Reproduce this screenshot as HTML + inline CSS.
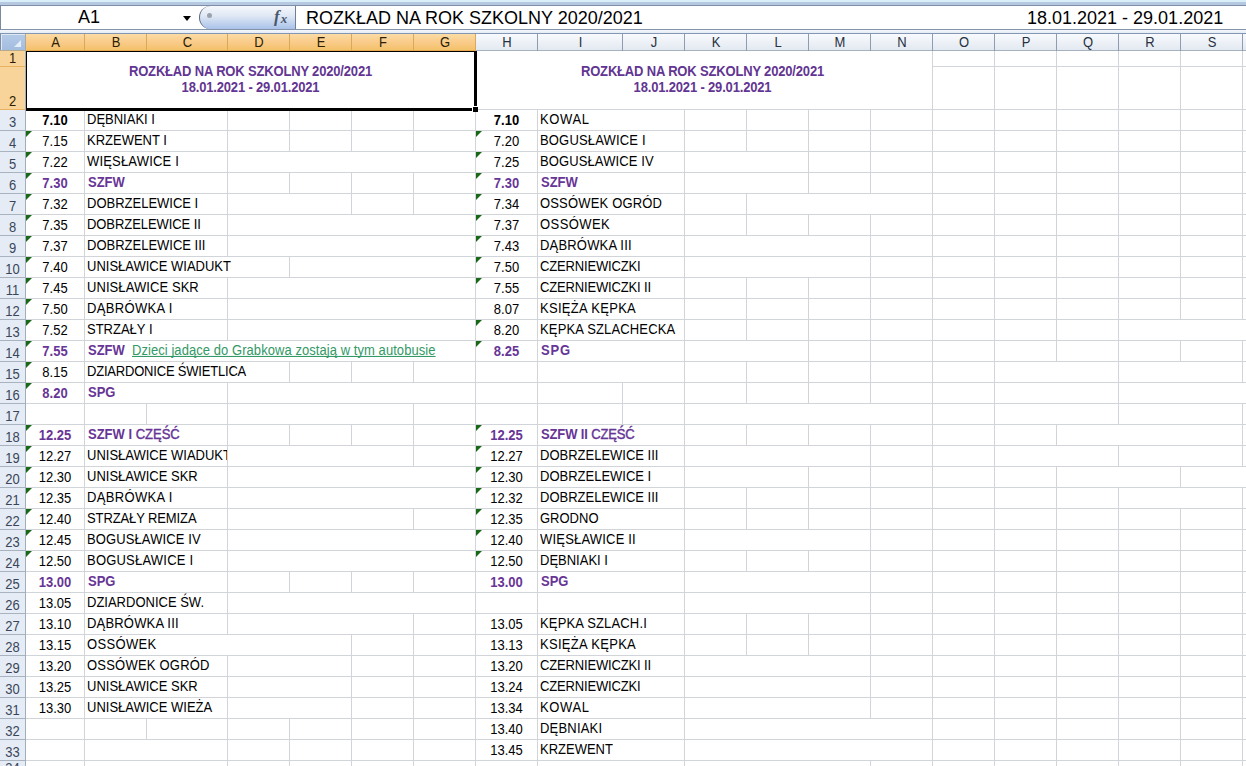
<!DOCTYPE html>
<html><head><meta charset="utf-8">
<style>
html,body{margin:0;padding:0;}
body{width:1246px;height:766px;overflow:hidden;position:relative;background:#fff;font-family:"Liberation Sans",sans-serif;}
.t{position:absolute;white-space:nowrap;line-height:13px;font-family:"Liberation Sans",sans-serif;transform:scaleY(1.08);transform-origin:0 100%}
.ttl{position:absolute;text-align:center;font-size:13px;letter-spacing:-0.17px;font-weight:bold;color:#623592;line-height:16px;white-space:nowrap;transform:scaleY(1.08);transform-origin:0 75%}
#top0{position:absolute;left:0;top:0;width:1246px;height:2px;background:#d9effa}
#top1{position:absolute;left:0;top:2px;width:1246px;height:3px;background:#b7c8e1}
#fbar{position:absolute;left:0;top:5px;width:1246px;height:23px;border-top:1px solid #7d8fa8;border-bottom:1px solid #8393a8;background:#fff}
#fstrip{position:absolute;left:0;top:30px;width:1246px;height:3px;background:linear-gradient(#f6f9fc,#e3ebf6);border-bottom:1px solid #8497b2}
#leftedge{position:absolute;left:0;top:5px;width:1px;height:25px;background:#7a8aa0}
#namebox{position:absolute;left:1px;top:6px;width:198px;height:23px;font-size:18px;line-height:23px;}
#nbtxt{position:absolute;left:77px;top:0}
#arrow{position:absolute;left:183px;top:16px;width:0;height:0;border-left:4.5px solid transparent;border-right:4.5px solid transparent;border-top:5px solid #000}
#pill{position:absolute;left:199px;top:6px;width:96px;height:23px;border-radius:11.5px 0 0 11.5px;background:linear-gradient(#f5f8fc,#e2e9f5 40%,#a9c2ea);}
#pillb{position:absolute;left:199px;top:6px;width:30px;height:23px;border-radius:11.5px 0 0 11.5px;border-left:1.3px solid #5d6b7e;box-sizing:border-box}
#pillsep{position:absolute;left:295px;top:6px;width:1px;height:23px;background:#6f7f94}
#dot{position:absolute;left:207px;top:13px;width:5px;height:5px;border-radius:50%;background:#9aa3ad}
#fx{position:absolute;left:274px;top:5px;color:#4a586c;line-height:23px;white-space:nowrap}
#ftxt{position:absolute;left:306px;top:7px;font-size:18px;line-height:23px;color:#000;white-space:nowrap}
#ftxt2{position:absolute;left:1027px;top:7px;font-size:18px;line-height:23px;color:#000;white-space:nowrap}
#selall{position:absolute;left:1px;top:34px;width:24px;height:16px;background:linear-gradient(#b5cbe8,#a3bde0);box-shadow:inset 1px 1px 0 #dfe9f6}
#selsep{position:absolute;left:25px;top:34px;width:1px;height:17px;background:#a9aa9c}
#selleft{position:absolute;left:0;top:34px;width:1px;height:17px;background:#7d8ea5}
#selbot{position:absolute;left:0;top:50px;width:25px;height:1px;background:#b5ab8c}
#seltri{position:absolute;left:14px;top:40px;width:0;height:0;border-left:7px solid transparent;border-bottom:7px solid #e4edf8}
.hl{display:inline-block;transform:scaleY(1.1);transform-origin:50% 100%}
.ch{position:absolute;top:34px;height:16px;line-height:17px;text-align:center;font-size:13px;color:#27313f;background:linear-gradient(#f8fafd,#e3e9f1);border-bottom:1px solid #a8b2bf}
.ch.sel{background:linear-gradient(#fbdca5,#f9ca88 55%,#f3c26a);color:#2c1e05;border-bottom:1px solid #e9a850}
.csep{position:absolute;top:34px;width:1px;height:17px;background:#8e9cb0}
.csep.sel{background:#d9a85a;height:16px}
.rh{position:absolute;left:0;width:25px;background:#e5ecf6;text-align:center;font-size:14px;color:#3a4658}
.rh.sel{background:#f9d49a;color:#2c1e05}
.rsep{position:absolute;left:0;width:25px;height:1px;background:#a9b3bf}
.rsep.sel{background:#eab25e}
#rhb{position:absolute;left:25px;top:51px;width:1px;height:715px;background:#a2adbb}
#grid{position:absolute;left:0;top:0}
</style></head><body>
<div id="top0"></div><div id="top1"></div>
<div id="fbar"></div>
<div id="leftedge"></div>
<div id="namebox"><span id="nbtxt">A1</span></div>
<div id="arrow"></div>
<div id="pill"></div><div id="pillb"></div><div id="dot"></div>
<div id="fx"><span style="font-family:'Liberation Serif',serif;font-weight:bold;font-style:italic;font-size:17px">f</span><span style="font-family:'Liberation Serif',serif;font-weight:bold;font-style:italic;font-size:13px;position:relative;left:1px;top:1px">x</span></div>
<div id="pillsep"></div>
<div id="ftxt">ROZKŁAD NA ROK SZKOLNY 2020/2021</div>
<div id="ftxt2">18.01.2021 - 29.01.2021</div>
<div id="fstrip"></div>
<div id="selall"></div><div id="seltri"></div><div id="selsep"></div><div id="selleft"></div><div id="selbot"></div>
<div class="ch sel" style="left:26px;width:59px"><span class="hl">A</span></div><div class="ch sel" style="left:85px;width:62px"><span class="hl">B</span></div><div class="ch sel" style="left:147px;width:81px"><span class="hl">C</span></div><div class="ch sel" style="left:228px;width:62px"><span class="hl">D</span></div><div class="ch sel" style="left:290px;width:62px"><span class="hl">E</span></div><div class="ch sel" style="left:352px;width:62px"><span class="hl">F</span></div><div class="ch sel" style="left:414px;width:62px"><span class="hl">G</span></div><div class="ch" style="left:476px;width:62px"><span class="hl">H</span></div><div class="ch" style="left:538px;width:85px"><span class="hl">I</span></div><div class="ch" style="left:623px;width:62px"><span class="hl">J</span></div><div class="ch" style="left:685px;width:62px"><span class="hl">K</span></div><div class="ch" style="left:747px;width:62px"><span class="hl">L</span></div><div class="ch" style="left:809px;width:62px"><span class="hl">M</span></div><div class="ch" style="left:871px;width:62px"><span class="hl">N</span></div><div class="ch" style="left:933px;width:62px"><span class="hl">O</span></div><div class="ch" style="left:995px;width:62px"><span class="hl">P</span></div><div class="ch" style="left:1057px;width:62px"><span class="hl">Q</span></div><div class="ch" style="left:1119px;width:62px"><span class="hl">R</span></div><div class="ch" style="left:1181px;width:62px"><span class="hl">S</span></div><div class="csep sel" style="left:84px"></div><div class="csep sel" style="left:146px"></div><div class="csep sel" style="left:227px"></div><div class="csep sel" style="left:289px"></div><div class="csep sel" style="left:351px"></div><div class="csep sel" style="left:413px"></div><div class="csep sel" style="left:475px"></div><div class="csep" style="left:537px"></div><div class="csep" style="left:622px"></div><div class="csep" style="left:684px"></div><div class="csep" style="left:746px"></div><div class="csep" style="left:808px"></div><div class="csep" style="left:870px"></div><div class="csep" style="left:932px"></div><div class="csep" style="left:994px"></div><div class="csep" style="left:1056px"></div><div class="csep" style="left:1118px"></div><div class="csep" style="left:1180px"></div><div class="csep" style="left:1242px"></div><div class="ch" style="left:1243px;width:10px"></div>
<div class="rh sel" style="top:51px;height:15px;line-height:15px"><span style="position:absolute;left:0;width:25px;bottom:0px;line-height:14px;font-size:13px;transform:scaleY(1.08);transform-origin:0 100%">1</span></div><div class="rsep sel" style="top:66px"></div><div class="rh sel" style="top:67px;height:42px;line-height:42px"><span style="position:absolute;left:0;width:25px;bottom:0px;line-height:14px;font-size:13px;transform:scaleY(1.08);transform-origin:0 100%">2</span></div><div class="rsep sel" style="top:109px"></div><div class="rh" style="top:110px;height:20px;line-height:20px"><span style="position:absolute;left:0;width:25px;bottom:0px;line-height:14px;font-size:13px;transform:scaleY(1.08);transform-origin:0 100%">3</span></div><div class="rsep" style="top:130px"></div><div class="rh" style="top:131px;height:20px;line-height:20px"><span style="position:absolute;left:0;width:25px;bottom:0px;line-height:14px;font-size:13px;transform:scaleY(1.08);transform-origin:0 100%">4</span></div><div class="rsep" style="top:151px"></div><div class="rh" style="top:152px;height:20px;line-height:20px"><span style="position:absolute;left:0;width:25px;bottom:0px;line-height:14px;font-size:13px;transform:scaleY(1.08);transform-origin:0 100%">5</span></div><div class="rsep" style="top:172px"></div><div class="rh" style="top:173px;height:20px;line-height:20px"><span style="position:absolute;left:0;width:25px;bottom:0px;line-height:14px;font-size:13px;transform:scaleY(1.08);transform-origin:0 100%">6</span></div><div class="rsep" style="top:193px"></div><div class="rh" style="top:194px;height:20px;line-height:20px"><span style="position:absolute;left:0;width:25px;bottom:0px;line-height:14px;font-size:13px;transform:scaleY(1.08);transform-origin:0 100%">7</span></div><div class="rsep" style="top:214px"></div><div class="rh" style="top:215px;height:20px;line-height:20px"><span style="position:absolute;left:0;width:25px;bottom:0px;line-height:14px;font-size:13px;transform:scaleY(1.08);transform-origin:0 100%">8</span></div><div class="rsep" style="top:235px"></div><div class="rh" style="top:236px;height:20px;line-height:20px"><span style="position:absolute;left:0;width:25px;bottom:0px;line-height:14px;font-size:13px;transform:scaleY(1.08);transform-origin:0 100%">9</span></div><div class="rsep" style="top:256px"></div><div class="rh" style="top:257px;height:20px;line-height:20px"><span style="position:absolute;left:0;width:25px;bottom:0px;line-height:14px;font-size:13px;transform:scaleY(1.08);transform-origin:0 100%">10</span></div><div class="rsep" style="top:277px"></div><div class="rh" style="top:278px;height:20px;line-height:20px"><span style="position:absolute;left:0;width:25px;bottom:0px;line-height:14px;font-size:13px;transform:scaleY(1.08);transform-origin:0 100%">11</span></div><div class="rsep" style="top:298px"></div><div class="rh" style="top:299px;height:20px;line-height:20px"><span style="position:absolute;left:0;width:25px;bottom:0px;line-height:14px;font-size:13px;transform:scaleY(1.08);transform-origin:0 100%">12</span></div><div class="rsep" style="top:319px"></div><div class="rh" style="top:320px;height:20px;line-height:20px"><span style="position:absolute;left:0;width:25px;bottom:0px;line-height:14px;font-size:13px;transform:scaleY(1.08);transform-origin:0 100%">13</span></div><div class="rsep" style="top:340px"></div><div class="rh" style="top:341px;height:20px;line-height:20px"><span style="position:absolute;left:0;width:25px;bottom:0px;line-height:14px;font-size:13px;transform:scaleY(1.08);transform-origin:0 100%">14</span></div><div class="rsep" style="top:361px"></div><div class="rh" style="top:362px;height:20px;line-height:20px"><span style="position:absolute;left:0;width:25px;bottom:0px;line-height:14px;font-size:13px;transform:scaleY(1.08);transform-origin:0 100%">15</span></div><div class="rsep" style="top:382px"></div><div class="rh" style="top:383px;height:20px;line-height:20px"><span style="position:absolute;left:0;width:25px;bottom:0px;line-height:14px;font-size:13px;transform:scaleY(1.08);transform-origin:0 100%">16</span></div><div class="rsep" style="top:403px"></div><div class="rh" style="top:404px;height:20px;line-height:20px"><span style="position:absolute;left:0;width:25px;bottom:0px;line-height:14px;font-size:13px;transform:scaleY(1.08);transform-origin:0 100%">17</span></div><div class="rsep" style="top:424px"></div><div class="rh" style="top:425px;height:20px;line-height:20px"><span style="position:absolute;left:0;width:25px;bottom:0px;line-height:14px;font-size:13px;transform:scaleY(1.08);transform-origin:0 100%">18</span></div><div class="rsep" style="top:445px"></div><div class="rh" style="top:446px;height:20px;line-height:20px"><span style="position:absolute;left:0;width:25px;bottom:0px;line-height:14px;font-size:13px;transform:scaleY(1.08);transform-origin:0 100%">19</span></div><div class="rsep" style="top:466px"></div><div class="rh" style="top:467px;height:20px;line-height:20px"><span style="position:absolute;left:0;width:25px;bottom:0px;line-height:14px;font-size:13px;transform:scaleY(1.08);transform-origin:0 100%">20</span></div><div class="rsep" style="top:487px"></div><div class="rh" style="top:488px;height:20px;line-height:20px"><span style="position:absolute;left:0;width:25px;bottom:0px;line-height:14px;font-size:13px;transform:scaleY(1.08);transform-origin:0 100%">21</span></div><div class="rsep" style="top:508px"></div><div class="rh" style="top:509px;height:20px;line-height:20px"><span style="position:absolute;left:0;width:25px;bottom:0px;line-height:14px;font-size:13px;transform:scaleY(1.08);transform-origin:0 100%">22</span></div><div class="rsep" style="top:529px"></div><div class="rh" style="top:530px;height:20px;line-height:20px"><span style="position:absolute;left:0;width:25px;bottom:0px;line-height:14px;font-size:13px;transform:scaleY(1.08);transform-origin:0 100%">23</span></div><div class="rsep" style="top:550px"></div><div class="rh" style="top:551px;height:20px;line-height:20px"><span style="position:absolute;left:0;width:25px;bottom:0px;line-height:14px;font-size:13px;transform:scaleY(1.08);transform-origin:0 100%">24</span></div><div class="rsep" style="top:571px"></div><div class="rh" style="top:572px;height:20px;line-height:20px"><span style="position:absolute;left:0;width:25px;bottom:0px;line-height:14px;font-size:13px;transform:scaleY(1.08);transform-origin:0 100%">25</span></div><div class="rsep" style="top:592px"></div><div class="rh" style="top:593px;height:20px;line-height:20px"><span style="position:absolute;left:0;width:25px;bottom:0px;line-height:14px;font-size:13px;transform:scaleY(1.08);transform-origin:0 100%">26</span></div><div class="rsep" style="top:613px"></div><div class="rh" style="top:614px;height:20px;line-height:20px"><span style="position:absolute;left:0;width:25px;bottom:0px;line-height:14px;font-size:13px;transform:scaleY(1.08);transform-origin:0 100%">27</span></div><div class="rsep" style="top:634px"></div><div class="rh" style="top:635px;height:20px;line-height:20px"><span style="position:absolute;left:0;width:25px;bottom:0px;line-height:14px;font-size:13px;transform:scaleY(1.08);transform-origin:0 100%">28</span></div><div class="rsep" style="top:655px"></div><div class="rh" style="top:656px;height:20px;line-height:20px"><span style="position:absolute;left:0;width:25px;bottom:0px;line-height:14px;font-size:13px;transform:scaleY(1.08);transform-origin:0 100%">29</span></div><div class="rsep" style="top:676px"></div><div class="rh" style="top:677px;height:20px;line-height:20px"><span style="position:absolute;left:0;width:25px;bottom:0px;line-height:14px;font-size:13px;transform:scaleY(1.08);transform-origin:0 100%">30</span></div><div class="rsep" style="top:697px"></div><div class="rh" style="top:698px;height:20px;line-height:20px"><span style="position:absolute;left:0;width:25px;bottom:0px;line-height:14px;font-size:13px;transform:scaleY(1.08);transform-origin:0 100%">31</span></div><div class="rsep" style="top:718px"></div><div class="rh" style="top:719px;height:20px;line-height:20px"><span style="position:absolute;left:0;width:25px;bottom:0px;line-height:14px;font-size:13px;transform:scaleY(1.08);transform-origin:0 100%">32</span></div><div class="rsep" style="top:739px"></div><div class="rh" style="top:740px;height:20px;line-height:20px"><span style="position:absolute;left:0;width:25px;bottom:0px;line-height:14px;font-size:13px;transform:scaleY(1.08);transform-origin:0 100%">33</span></div><div class="rsep" style="top:760px"></div><div class="rh" style="top:761px;height:20px"><span style="position:absolute;left:0;width:25px;top:1px;line-height:14px;font-size:13px;transform:scaleY(1.08)">34</span></div><div class="rsep" style="top:781px"></div>
<div id="rhb"></div>
<svg id="grid" width="1246" height="766">
<rect x="933" y="66" width="313" height="1" fill="#d1d5d9"/><rect x="932" y="51" width="1" height="58" fill="#d1d5d9"/><rect x="994" y="51" width="1" height="58" fill="#d1d5d9"/><rect x="1056" y="51" width="1" height="58" fill="#d1d5d9"/><rect x="1118" y="51" width="1" height="58" fill="#d1d5d9"/><rect x="1180" y="51" width="1" height="58" fill="#d1d5d9"/><rect x="1242" y="51" width="1" height="58" fill="#d1d5d9"/><rect x="476" y="109" width="770" height="1" fill="#d1d5d9"/><rect x="26" y="130" width="1220" height="1" fill="#d1d5d9"/><rect x="84" y="110" width="1" height="20" fill="#d1d5d9"/><rect x="227" y="110" width="1" height="20" fill="#d1d5d9"/><rect x="289" y="110" width="1" height="20" fill="#d1d5d9"/><rect x="351" y="110" width="1" height="20" fill="#d1d5d9"/><rect x="413" y="110" width="1" height="20" fill="#d1d5d9"/><rect x="475" y="110" width="1" height="20" fill="#d1d5d9"/><rect x="537" y="110" width="1" height="20" fill="#d1d5d9"/><rect x="684" y="110" width="1" height="20" fill="#d1d5d9"/><rect x="746" y="110" width="1" height="20" fill="#d1d5d9"/><rect x="808" y="110" width="1" height="20" fill="#d1d5d9"/><rect x="870" y="110" width="1" height="20" fill="#d1d5d9"/><rect x="932" y="110" width="1" height="20" fill="#d1d5d9"/><rect x="994" y="110" width="1" height="20" fill="#d1d5d9"/><rect x="1056" y="110" width="1" height="20" fill="#d1d5d9"/><rect x="1118" y="110" width="1" height="20" fill="#d1d5d9"/><rect x="1180" y="110" width="1" height="20" fill="#d1d5d9"/><rect x="1242" y="110" width="1" height="20" fill="#d1d5d9"/><rect x="26" y="151" width="1220" height="1" fill="#d1d5d9"/><rect x="84" y="131" width="1" height="20" fill="#d1d5d9"/><rect x="227" y="131" width="1" height="20" fill="#d1d5d9"/><rect x="289" y="131" width="1" height="20" fill="#d1d5d9"/><rect x="351" y="131" width="1" height="20" fill="#d1d5d9"/><rect x="413" y="131" width="1" height="20" fill="#d1d5d9"/><rect x="475" y="131" width="1" height="20" fill="#d1d5d9"/><rect x="537" y="131" width="1" height="20" fill="#d1d5d9"/><rect x="684" y="131" width="1" height="20" fill="#d1d5d9"/><rect x="746" y="131" width="1" height="20" fill="#d1d5d9"/><rect x="808" y="131" width="1" height="20" fill="#d1d5d9"/><rect x="870" y="131" width="1" height="20" fill="#d1d5d9"/><rect x="932" y="131" width="1" height="20" fill="#d1d5d9"/><rect x="994" y="131" width="1" height="20" fill="#d1d5d9"/><rect x="1056" y="131" width="1" height="20" fill="#d1d5d9"/><rect x="1118" y="131" width="1" height="20" fill="#d1d5d9"/><rect x="1180" y="131" width="1" height="20" fill="#d1d5d9"/><rect x="1242" y="131" width="1" height="20" fill="#d1d5d9"/><rect x="26" y="172" width="1220" height="1" fill="#d1d5d9"/><rect x="84" y="152" width="1" height="20" fill="#d1d5d9"/><rect x="227" y="152" width="1" height="20" fill="#d1d5d9"/><rect x="475" y="152" width="1" height="20" fill="#d1d5d9"/><rect x="537" y="152" width="1" height="20" fill="#d1d5d9"/><rect x="684" y="152" width="1" height="20" fill="#d1d5d9"/><rect x="808" y="152" width="1" height="20" fill="#d1d5d9"/><rect x="870" y="152" width="1" height="20" fill="#d1d5d9"/><rect x="932" y="152" width="1" height="20" fill="#d1d5d9"/><rect x="994" y="152" width="1" height="20" fill="#d1d5d9"/><rect x="1056" y="152" width="1" height="20" fill="#d1d5d9"/><rect x="1118" y="152" width="1" height="20" fill="#d1d5d9"/><rect x="1180" y="152" width="1" height="20" fill="#d1d5d9"/><rect x="1242" y="152" width="1" height="20" fill="#d1d5d9"/><rect x="26" y="193" width="1220" height="1" fill="#d1d5d9"/><rect x="84" y="173" width="1" height="20" fill="#d1d5d9"/><rect x="227" y="173" width="1" height="20" fill="#d1d5d9"/><rect x="289" y="173" width="1" height="20" fill="#d1d5d9"/><rect x="351" y="173" width="1" height="20" fill="#d1d5d9"/><rect x="413" y="173" width="1" height="20" fill="#d1d5d9"/><rect x="475" y="173" width="1" height="20" fill="#d1d5d9"/><rect x="537" y="173" width="1" height="20" fill="#d1d5d9"/><rect x="684" y="173" width="1" height="20" fill="#d1d5d9"/><rect x="808" y="173" width="1" height="20" fill="#d1d5d9"/><rect x="870" y="173" width="1" height="20" fill="#d1d5d9"/><rect x="932" y="173" width="1" height="20" fill="#d1d5d9"/><rect x="994" y="173" width="1" height="20" fill="#d1d5d9"/><rect x="1056" y="173" width="1" height="20" fill="#d1d5d9"/><rect x="1118" y="173" width="1" height="20" fill="#d1d5d9"/><rect x="1180" y="173" width="1" height="20" fill="#d1d5d9"/><rect x="1242" y="173" width="1" height="20" fill="#d1d5d9"/><rect x="26" y="214" width="1220" height="1" fill="#d1d5d9"/><rect x="84" y="194" width="1" height="20" fill="#d1d5d9"/><rect x="227" y="194" width="1" height="20" fill="#d1d5d9"/><rect x="351" y="194" width="1" height="20" fill="#d1d5d9"/><rect x="413" y="194" width="1" height="20" fill="#d1d5d9"/><rect x="475" y="194" width="1" height="20" fill="#d1d5d9"/><rect x="537" y="194" width="1" height="20" fill="#d1d5d9"/><rect x="684" y="194" width="1" height="20" fill="#d1d5d9"/><rect x="746" y="194" width="1" height="20" fill="#d1d5d9"/><rect x="932" y="194" width="1" height="20" fill="#d1d5d9"/><rect x="994" y="194" width="1" height="20" fill="#d1d5d9"/><rect x="1056" y="194" width="1" height="20" fill="#d1d5d9"/><rect x="1118" y="194" width="1" height="20" fill="#d1d5d9"/><rect x="1180" y="194" width="1" height="20" fill="#d1d5d9"/><rect x="1242" y="194" width="1" height="20" fill="#d1d5d9"/><rect x="26" y="235" width="1220" height="1" fill="#d1d5d9"/><rect x="84" y="215" width="1" height="20" fill="#d1d5d9"/><rect x="227" y="215" width="1" height="20" fill="#d1d5d9"/><rect x="475" y="215" width="1" height="20" fill="#d1d5d9"/><rect x="537" y="215" width="1" height="20" fill="#d1d5d9"/><rect x="684" y="215" width="1" height="20" fill="#d1d5d9"/><rect x="746" y="215" width="1" height="20" fill="#d1d5d9"/><rect x="808" y="215" width="1" height="20" fill="#d1d5d9"/><rect x="870" y="215" width="1" height="20" fill="#d1d5d9"/><rect x="932" y="215" width="1" height="20" fill="#d1d5d9"/><rect x="994" y="215" width="1" height="20" fill="#d1d5d9"/><rect x="1056" y="215" width="1" height="20" fill="#d1d5d9"/><rect x="1118" y="215" width="1" height="20" fill="#d1d5d9"/><rect x="1180" y="215" width="1" height="20" fill="#d1d5d9"/><rect x="1242" y="215" width="1" height="20" fill="#d1d5d9"/><rect x="26" y="256" width="1220" height="1" fill="#d1d5d9"/><rect x="84" y="236" width="1" height="20" fill="#d1d5d9"/><rect x="227" y="236" width="1" height="20" fill="#d1d5d9"/><rect x="475" y="236" width="1" height="20" fill="#d1d5d9"/><rect x="537" y="236" width="1" height="20" fill="#d1d5d9"/><rect x="684" y="236" width="1" height="20" fill="#d1d5d9"/><rect x="870" y="236" width="1" height="20" fill="#d1d5d9"/><rect x="932" y="236" width="1" height="20" fill="#d1d5d9"/><rect x="994" y="236" width="1" height="20" fill="#d1d5d9"/><rect x="1056" y="236" width="1" height="20" fill="#d1d5d9"/><rect x="1118" y="236" width="1" height="20" fill="#d1d5d9"/><rect x="1180" y="236" width="1" height="20" fill="#d1d5d9"/><rect x="1242" y="236" width="1" height="20" fill="#d1d5d9"/><rect x="26" y="277" width="1220" height="1" fill="#d1d5d9"/><rect x="84" y="257" width="1" height="20" fill="#d1d5d9"/><rect x="289" y="257" width="1" height="20" fill="#d1d5d9"/><rect x="475" y="257" width="1" height="20" fill="#d1d5d9"/><rect x="537" y="257" width="1" height="20" fill="#d1d5d9"/><rect x="684" y="257" width="1" height="20" fill="#d1d5d9"/><rect x="870" y="257" width="1" height="20" fill="#d1d5d9"/><rect x="932" y="257" width="1" height="20" fill="#d1d5d9"/><rect x="994" y="257" width="1" height="20" fill="#d1d5d9"/><rect x="1056" y="257" width="1" height="20" fill="#d1d5d9"/><rect x="1118" y="257" width="1" height="20" fill="#d1d5d9"/><rect x="1180" y="257" width="1" height="20" fill="#d1d5d9"/><rect x="1242" y="257" width="1" height="20" fill="#d1d5d9"/><rect x="26" y="298" width="1220" height="1" fill="#d1d5d9"/><rect x="84" y="278" width="1" height="20" fill="#d1d5d9"/><rect x="227" y="278" width="1" height="20" fill="#d1d5d9"/><rect x="475" y="278" width="1" height="20" fill="#d1d5d9"/><rect x="537" y="278" width="1" height="20" fill="#d1d5d9"/><rect x="684" y="278" width="1" height="20" fill="#d1d5d9"/><rect x="746" y="278" width="1" height="20" fill="#d1d5d9"/><rect x="808" y="278" width="1" height="20" fill="#d1d5d9"/><rect x="870" y="278" width="1" height="20" fill="#d1d5d9"/><rect x="932" y="278" width="1" height="20" fill="#d1d5d9"/><rect x="994" y="278" width="1" height="20" fill="#d1d5d9"/><rect x="1056" y="278" width="1" height="20" fill="#d1d5d9"/><rect x="1118" y="278" width="1" height="20" fill="#d1d5d9"/><rect x="1180" y="278" width="1" height="20" fill="#d1d5d9"/><rect x="1242" y="278" width="1" height="20" fill="#d1d5d9"/><rect x="26" y="319" width="1220" height="1" fill="#d1d5d9"/><rect x="84" y="299" width="1" height="20" fill="#d1d5d9"/><rect x="227" y="299" width="1" height="20" fill="#d1d5d9"/><rect x="475" y="299" width="1" height="20" fill="#d1d5d9"/><rect x="537" y="299" width="1" height="20" fill="#d1d5d9"/><rect x="684" y="299" width="1" height="20" fill="#d1d5d9"/><rect x="746" y="299" width="1" height="20" fill="#d1d5d9"/><rect x="808" y="299" width="1" height="20" fill="#d1d5d9"/><rect x="870" y="299" width="1" height="20" fill="#d1d5d9"/><rect x="932" y="299" width="1" height="20" fill="#d1d5d9"/><rect x="994" y="299" width="1" height="20" fill="#d1d5d9"/><rect x="1056" y="299" width="1" height="20" fill="#d1d5d9"/><rect x="1118" y="299" width="1" height="20" fill="#d1d5d9"/><rect x="1180" y="299" width="1" height="20" fill="#d1d5d9"/><rect x="1242" y="299" width="1" height="20" fill="#d1d5d9"/><rect x="26" y="340" width="1220" height="1" fill="#d1d5d9"/><rect x="84" y="320" width="1" height="20" fill="#d1d5d9"/><rect x="227" y="320" width="1" height="20" fill="#d1d5d9"/><rect x="475" y="320" width="1" height="20" fill="#d1d5d9"/><rect x="537" y="320" width="1" height="20" fill="#d1d5d9"/><rect x="684" y="320" width="1" height="20" fill="#d1d5d9"/><rect x="746" y="320" width="1" height="20" fill="#d1d5d9"/><rect x="808" y="320" width="1" height="20" fill="#d1d5d9"/><rect x="870" y="320" width="1" height="20" fill="#d1d5d9"/><rect x="932" y="320" width="1" height="20" fill="#d1d5d9"/><rect x="994" y="320" width="1" height="20" fill="#d1d5d9"/><rect x="1056" y="320" width="1" height="20" fill="#d1d5d9"/><rect x="1118" y="320" width="1" height="20" fill="#d1d5d9"/><rect x="26" y="361" width="1220" height="1" fill="#d1d5d9"/><rect x="84" y="341" width="1" height="20" fill="#d1d5d9"/><rect x="475" y="341" width="1" height="20" fill="#d1d5d9"/><rect x="537" y="341" width="1" height="20" fill="#d1d5d9"/><rect x="684" y="341" width="1" height="20" fill="#d1d5d9"/><rect x="808" y="341" width="1" height="20" fill="#d1d5d9"/><rect x="870" y="341" width="1" height="20" fill="#d1d5d9"/><rect x="932" y="341" width="1" height="20" fill="#d1d5d9"/><rect x="994" y="341" width="1" height="20" fill="#d1d5d9"/><rect x="1056" y="341" width="1" height="20" fill="#d1d5d9"/><rect x="1118" y="341" width="1" height="20" fill="#d1d5d9"/><rect x="1180" y="341" width="1" height="20" fill="#d1d5d9"/><rect x="1242" y="341" width="1" height="20" fill="#d1d5d9"/><rect x="26" y="382" width="1220" height="1" fill="#d1d5d9"/><rect x="84" y="362" width="1" height="20" fill="#d1d5d9"/><rect x="289" y="362" width="1" height="20" fill="#d1d5d9"/><rect x="351" y="362" width="1" height="20" fill="#d1d5d9"/><rect x="413" y="362" width="1" height="20" fill="#d1d5d9"/><rect x="475" y="362" width="1" height="20" fill="#d1d5d9"/><rect x="537" y="362" width="1" height="20" fill="#d1d5d9"/><rect x="684" y="362" width="1" height="20" fill="#d1d5d9"/><rect x="746" y="362" width="1" height="20" fill="#d1d5d9"/><rect x="808" y="362" width="1" height="20" fill="#d1d5d9"/><rect x="870" y="362" width="1" height="20" fill="#d1d5d9"/><rect x="932" y="362" width="1" height="20" fill="#d1d5d9"/><rect x="994" y="362" width="1" height="20" fill="#d1d5d9"/><rect x="1118" y="362" width="1" height="20" fill="#d1d5d9"/><rect x="1242" y="362" width="1" height="20" fill="#d1d5d9"/><rect x="26" y="403" width="1220" height="1" fill="#d1d5d9"/><rect x="84" y="383" width="1" height="20" fill="#d1d5d9"/><rect x="227" y="383" width="1" height="20" fill="#d1d5d9"/><rect x="475" y="383" width="1" height="20" fill="#d1d5d9"/><rect x="537" y="383" width="1" height="20" fill="#d1d5d9"/><rect x="622" y="383" width="1" height="20" fill="#d1d5d9"/><rect x="684" y="383" width="1" height="20" fill="#d1d5d9"/><rect x="746" y="383" width="1" height="20" fill="#d1d5d9"/><rect x="808" y="383" width="1" height="20" fill="#d1d5d9"/><rect x="870" y="383" width="1" height="20" fill="#d1d5d9"/><rect x="932" y="383" width="1" height="20" fill="#d1d5d9"/><rect x="994" y="383" width="1" height="20" fill="#d1d5d9"/><rect x="1118" y="383" width="1" height="20" fill="#d1d5d9"/><rect x="26" y="424" width="1220" height="1" fill="#d1d5d9"/><rect x="84" y="404" width="1" height="20" fill="#d1d5d9"/><rect x="146" y="404" width="1" height="20" fill="#d1d5d9"/><rect x="227" y="404" width="1" height="20" fill="#d1d5d9"/><rect x="413" y="404" width="1" height="20" fill="#d1d5d9"/><rect x="475" y="404" width="1" height="20" fill="#d1d5d9"/><rect x="537" y="404" width="1" height="20" fill="#d1d5d9"/><rect x="622" y="404" width="1" height="20" fill="#d1d5d9"/><rect x="684" y="404" width="1" height="20" fill="#d1d5d9"/><rect x="932" y="404" width="1" height="20" fill="#d1d5d9"/><rect x="994" y="404" width="1" height="20" fill="#d1d5d9"/><rect x="1118" y="404" width="1" height="20" fill="#d1d5d9"/><rect x="1242" y="404" width="1" height="20" fill="#d1d5d9"/><rect x="26" y="445" width="1220" height="1" fill="#d1d5d9"/><rect x="84" y="425" width="1" height="20" fill="#d1d5d9"/><rect x="227" y="425" width="1" height="20" fill="#d1d5d9"/><rect x="289" y="425" width="1" height="20" fill="#d1d5d9"/><rect x="351" y="425" width="1" height="20" fill="#d1d5d9"/><rect x="413" y="425" width="1" height="20" fill="#d1d5d9"/><rect x="475" y="425" width="1" height="20" fill="#d1d5d9"/><rect x="537" y="425" width="1" height="20" fill="#d1d5d9"/><rect x="684" y="425" width="1" height="20" fill="#d1d5d9"/><rect x="746" y="425" width="1" height="20" fill="#d1d5d9"/><rect x="808" y="425" width="1" height="20" fill="#d1d5d9"/><rect x="870" y="425" width="1" height="20" fill="#d1d5d9"/><rect x="932" y="425" width="1" height="20" fill="#d1d5d9"/><rect x="994" y="425" width="1" height="20" fill="#d1d5d9"/><rect x="1056" y="425" width="1" height="20" fill="#d1d5d9"/><rect x="1242" y="425" width="1" height="20" fill="#d1d5d9"/><rect x="26" y="466" width="1220" height="1" fill="#d1d5d9"/><rect x="84" y="446" width="1" height="20" fill="#d1d5d9"/><rect x="227" y="446" width="1" height="20" fill="#d1d5d9"/><rect x="413" y="446" width="1" height="20" fill="#d1d5d9"/><rect x="475" y="446" width="1" height="20" fill="#d1d5d9"/><rect x="537" y="446" width="1" height="20" fill="#d1d5d9"/><rect x="684" y="446" width="1" height="20" fill="#d1d5d9"/><rect x="870" y="446" width="1" height="20" fill="#d1d5d9"/><rect x="932" y="446" width="1" height="20" fill="#d1d5d9"/><rect x="994" y="446" width="1" height="20" fill="#d1d5d9"/><rect x="1118" y="446" width="1" height="20" fill="#d1d5d9"/><rect x="1242" y="446" width="1" height="20" fill="#d1d5d9"/><rect x="26" y="487" width="1220" height="1" fill="#d1d5d9"/><rect x="84" y="467" width="1" height="20" fill="#d1d5d9"/><rect x="227" y="467" width="1" height="20" fill="#d1d5d9"/><rect x="475" y="467" width="1" height="20" fill="#d1d5d9"/><rect x="537" y="467" width="1" height="20" fill="#d1d5d9"/><rect x="684" y="467" width="1" height="20" fill="#d1d5d9"/><rect x="808" y="467" width="1" height="20" fill="#d1d5d9"/><rect x="870" y="467" width="1" height="20" fill="#d1d5d9"/><rect x="932" y="467" width="1" height="20" fill="#d1d5d9"/><rect x="994" y="467" width="1" height="20" fill="#d1d5d9"/><rect x="1056" y="467" width="1" height="20" fill="#d1d5d9"/><rect x="1180" y="467" width="1" height="20" fill="#d1d5d9"/><rect x="26" y="508" width="1220" height="1" fill="#d1d5d9"/><rect x="84" y="488" width="1" height="20" fill="#d1d5d9"/><rect x="227" y="488" width="1" height="20" fill="#d1d5d9"/><rect x="475" y="488" width="1" height="20" fill="#d1d5d9"/><rect x="537" y="488" width="1" height="20" fill="#d1d5d9"/><rect x="684" y="488" width="1" height="20" fill="#d1d5d9"/><rect x="746" y="488" width="1" height="20" fill="#d1d5d9"/><rect x="808" y="488" width="1" height="20" fill="#d1d5d9"/><rect x="870" y="488" width="1" height="20" fill="#d1d5d9"/><rect x="932" y="488" width="1" height="20" fill="#d1d5d9"/><rect x="994" y="488" width="1" height="20" fill="#d1d5d9"/><rect x="1056" y="488" width="1" height="20" fill="#d1d5d9"/><rect x="1118" y="488" width="1" height="20" fill="#d1d5d9"/><rect x="1242" y="488" width="1" height="20" fill="#d1d5d9"/><rect x="26" y="529" width="1220" height="1" fill="#d1d5d9"/><rect x="84" y="509" width="1" height="20" fill="#d1d5d9"/><rect x="227" y="509" width="1" height="20" fill="#d1d5d9"/><rect x="413" y="509" width="1" height="20" fill="#d1d5d9"/><rect x="475" y="509" width="1" height="20" fill="#d1d5d9"/><rect x="537" y="509" width="1" height="20" fill="#d1d5d9"/><rect x="684" y="509" width="1" height="20" fill="#d1d5d9"/><rect x="746" y="509" width="1" height="20" fill="#d1d5d9"/><rect x="808" y="509" width="1" height="20" fill="#d1d5d9"/><rect x="870" y="509" width="1" height="20" fill="#d1d5d9"/><rect x="932" y="509" width="1" height="20" fill="#d1d5d9"/><rect x="994" y="509" width="1" height="20" fill="#d1d5d9"/><rect x="1056" y="509" width="1" height="20" fill="#d1d5d9"/><rect x="1118" y="509" width="1" height="20" fill="#d1d5d9"/><rect x="1180" y="509" width="1" height="20" fill="#d1d5d9"/><rect x="1242" y="509" width="1" height="20" fill="#d1d5d9"/><rect x="26" y="550" width="1220" height="1" fill="#d1d5d9"/><rect x="84" y="530" width="1" height="20" fill="#d1d5d9"/><rect x="227" y="530" width="1" height="20" fill="#d1d5d9"/><rect x="475" y="530" width="1" height="20" fill="#d1d5d9"/><rect x="537" y="530" width="1" height="20" fill="#d1d5d9"/><rect x="684" y="530" width="1" height="20" fill="#d1d5d9"/><rect x="870" y="530" width="1" height="20" fill="#d1d5d9"/><rect x="932" y="530" width="1" height="20" fill="#d1d5d9"/><rect x="994" y="530" width="1" height="20" fill="#d1d5d9"/><rect x="1056" y="530" width="1" height="20" fill="#d1d5d9"/><rect x="1118" y="530" width="1" height="20" fill="#d1d5d9"/><rect x="1180" y="530" width="1" height="20" fill="#d1d5d9"/><rect x="1242" y="530" width="1" height="20" fill="#d1d5d9"/><rect x="26" y="571" width="1220" height="1" fill="#d1d5d9"/><rect x="84" y="551" width="1" height="20" fill="#d1d5d9"/><rect x="227" y="551" width="1" height="20" fill="#d1d5d9"/><rect x="475" y="551" width="1" height="20" fill="#d1d5d9"/><rect x="537" y="551" width="1" height="20" fill="#d1d5d9"/><rect x="684" y="551" width="1" height="20" fill="#d1d5d9"/><rect x="746" y="551" width="1" height="20" fill="#d1d5d9"/><rect x="808" y="551" width="1" height="20" fill="#d1d5d9"/><rect x="870" y="551" width="1" height="20" fill="#d1d5d9"/><rect x="932" y="551" width="1" height="20" fill="#d1d5d9"/><rect x="994" y="551" width="1" height="20" fill="#d1d5d9"/><rect x="1056" y="551" width="1" height="20" fill="#d1d5d9"/><rect x="1118" y="551" width="1" height="20" fill="#d1d5d9"/><rect x="1180" y="551" width="1" height="20" fill="#d1d5d9"/><rect x="1242" y="551" width="1" height="20" fill="#d1d5d9"/><rect x="26" y="592" width="1220" height="1" fill="#d1d5d9"/><rect x="84" y="572" width="1" height="20" fill="#d1d5d9"/><rect x="227" y="572" width="1" height="20" fill="#d1d5d9"/><rect x="289" y="572" width="1" height="20" fill="#d1d5d9"/><rect x="351" y="572" width="1" height="20" fill="#d1d5d9"/><rect x="413" y="572" width="1" height="20" fill="#d1d5d9"/><rect x="475" y="572" width="1" height="20" fill="#d1d5d9"/><rect x="537" y="572" width="1" height="20" fill="#d1d5d9"/><rect x="684" y="572" width="1" height="20" fill="#d1d5d9"/><rect x="870" y="572" width="1" height="20" fill="#d1d5d9"/><rect x="932" y="572" width="1" height="20" fill="#d1d5d9"/><rect x="994" y="572" width="1" height="20" fill="#d1d5d9"/><rect x="1056" y="572" width="1" height="20" fill="#d1d5d9"/><rect x="1118" y="572" width="1" height="20" fill="#d1d5d9"/><rect x="1180" y="572" width="1" height="20" fill="#d1d5d9"/><rect x="1242" y="572" width="1" height="20" fill="#d1d5d9"/><rect x="26" y="613" width="1220" height="1" fill="#d1d5d9"/><rect x="84" y="593" width="1" height="20" fill="#d1d5d9"/><rect x="227" y="593" width="1" height="20" fill="#d1d5d9"/><rect x="475" y="593" width="1" height="20" fill="#d1d5d9"/><rect x="537" y="593" width="1" height="20" fill="#d1d5d9"/><rect x="684" y="593" width="1" height="20" fill="#d1d5d9"/><rect x="870" y="593" width="1" height="20" fill="#d1d5d9"/><rect x="932" y="593" width="1" height="20" fill="#d1d5d9"/><rect x="994" y="593" width="1" height="20" fill="#d1d5d9"/><rect x="1056" y="593" width="1" height="20" fill="#d1d5d9"/><rect x="1118" y="593" width="1" height="20" fill="#d1d5d9"/><rect x="1180" y="593" width="1" height="20" fill="#d1d5d9"/><rect x="1242" y="593" width="1" height="20" fill="#d1d5d9"/><rect x="26" y="634" width="1220" height="1" fill="#d1d5d9"/><rect x="84" y="614" width="1" height="20" fill="#d1d5d9"/><rect x="227" y="614" width="1" height="20" fill="#d1d5d9"/><rect x="413" y="614" width="1" height="20" fill="#d1d5d9"/><rect x="475" y="614" width="1" height="20" fill="#d1d5d9"/><rect x="537" y="614" width="1" height="20" fill="#d1d5d9"/><rect x="684" y="614" width="1" height="20" fill="#d1d5d9"/><rect x="746" y="614" width="1" height="20" fill="#d1d5d9"/><rect x="808" y="614" width="1" height="20" fill="#d1d5d9"/><rect x="870" y="614" width="1" height="20" fill="#d1d5d9"/><rect x="932" y="614" width="1" height="20" fill="#d1d5d9"/><rect x="994" y="614" width="1" height="20" fill="#d1d5d9"/><rect x="1056" y="614" width="1" height="20" fill="#d1d5d9"/><rect x="1118" y="614" width="1" height="20" fill="#d1d5d9"/><rect x="1180" y="614" width="1" height="20" fill="#d1d5d9"/><rect x="1242" y="614" width="1" height="20" fill="#d1d5d9"/><rect x="26" y="655" width="1220" height="1" fill="#d1d5d9"/><rect x="84" y="635" width="1" height="20" fill="#d1d5d9"/><rect x="351" y="635" width="1" height="20" fill="#d1d5d9"/><rect x="413" y="635" width="1" height="20" fill="#d1d5d9"/><rect x="475" y="635" width="1" height="20" fill="#d1d5d9"/><rect x="537" y="635" width="1" height="20" fill="#d1d5d9"/><rect x="684" y="635" width="1" height="20" fill="#d1d5d9"/><rect x="746" y="635" width="1" height="20" fill="#d1d5d9"/><rect x="808" y="635" width="1" height="20" fill="#d1d5d9"/><rect x="870" y="635" width="1" height="20" fill="#d1d5d9"/><rect x="932" y="635" width="1" height="20" fill="#d1d5d9"/><rect x="994" y="635" width="1" height="20" fill="#d1d5d9"/><rect x="1056" y="635" width="1" height="20" fill="#d1d5d9"/><rect x="1118" y="635" width="1" height="20" fill="#d1d5d9"/><rect x="1180" y="635" width="1" height="20" fill="#d1d5d9"/><rect x="1242" y="635" width="1" height="20" fill="#d1d5d9"/><rect x="26" y="676" width="1220" height="1" fill="#d1d5d9"/><rect x="84" y="656" width="1" height="20" fill="#d1d5d9"/><rect x="227" y="656" width="1" height="20" fill="#d1d5d9"/><rect x="351" y="656" width="1" height="20" fill="#d1d5d9"/><rect x="413" y="656" width="1" height="20" fill="#d1d5d9"/><rect x="475" y="656" width="1" height="20" fill="#d1d5d9"/><rect x="537" y="656" width="1" height="20" fill="#d1d5d9"/><rect x="684" y="656" width="1" height="20" fill="#d1d5d9"/><rect x="870" y="656" width="1" height="20" fill="#d1d5d9"/><rect x="932" y="656" width="1" height="20" fill="#d1d5d9"/><rect x="994" y="656" width="1" height="20" fill="#d1d5d9"/><rect x="1056" y="656" width="1" height="20" fill="#d1d5d9"/><rect x="1118" y="656" width="1" height="20" fill="#d1d5d9"/><rect x="1180" y="656" width="1" height="20" fill="#d1d5d9"/><rect x="1242" y="656" width="1" height="20" fill="#d1d5d9"/><rect x="26" y="697" width="1220" height="1" fill="#d1d5d9"/><rect x="84" y="677" width="1" height="20" fill="#d1d5d9"/><rect x="227" y="677" width="1" height="20" fill="#d1d5d9"/><rect x="351" y="677" width="1" height="20" fill="#d1d5d9"/><rect x="413" y="677" width="1" height="20" fill="#d1d5d9"/><rect x="475" y="677" width="1" height="20" fill="#d1d5d9"/><rect x="537" y="677" width="1" height="20" fill="#d1d5d9"/><rect x="684" y="677" width="1" height="20" fill="#d1d5d9"/><rect x="870" y="677" width="1" height="20" fill="#d1d5d9"/><rect x="932" y="677" width="1" height="20" fill="#d1d5d9"/><rect x="994" y="677" width="1" height="20" fill="#d1d5d9"/><rect x="1056" y="677" width="1" height="20" fill="#d1d5d9"/><rect x="1118" y="677" width="1" height="20" fill="#d1d5d9"/><rect x="1180" y="677" width="1" height="20" fill="#d1d5d9"/><rect x="1242" y="677" width="1" height="20" fill="#d1d5d9"/><rect x="26" y="718" width="1220" height="1" fill="#d1d5d9"/><rect x="84" y="698" width="1" height="20" fill="#d1d5d9"/><rect x="227" y="698" width="1" height="20" fill="#d1d5d9"/><rect x="351" y="698" width="1" height="20" fill="#d1d5d9"/><rect x="413" y="698" width="1" height="20" fill="#d1d5d9"/><rect x="475" y="698" width="1" height="20" fill="#d1d5d9"/><rect x="537" y="698" width="1" height="20" fill="#d1d5d9"/><rect x="684" y="698" width="1" height="20" fill="#d1d5d9"/><rect x="870" y="698" width="1" height="20" fill="#d1d5d9"/><rect x="932" y="698" width="1" height="20" fill="#d1d5d9"/><rect x="994" y="698" width="1" height="20" fill="#d1d5d9"/><rect x="1056" y="698" width="1" height="20" fill="#d1d5d9"/><rect x="1118" y="698" width="1" height="20" fill="#d1d5d9"/><rect x="1180" y="698" width="1" height="20" fill="#d1d5d9"/><rect x="1242" y="698" width="1" height="20" fill="#d1d5d9"/><rect x="26" y="739" width="1220" height="1" fill="#d1d5d9"/><rect x="84" y="719" width="1" height="20" fill="#d1d5d9"/><rect x="146" y="719" width="1" height="20" fill="#d1d5d9"/><rect x="227" y="719" width="1" height="20" fill="#d1d5d9"/><rect x="289" y="719" width="1" height="20" fill="#d1d5d9"/><rect x="351" y="719" width="1" height="20" fill="#d1d5d9"/><rect x="413" y="719" width="1" height="20" fill="#d1d5d9"/><rect x="475" y="719" width="1" height="20" fill="#d1d5d9"/><rect x="537" y="719" width="1" height="20" fill="#d1d5d9"/><rect x="684" y="719" width="1" height="20" fill="#d1d5d9"/><rect x="932" y="719" width="1" height="20" fill="#d1d5d9"/><rect x="994" y="719" width="1" height="20" fill="#d1d5d9"/><rect x="1056" y="719" width="1" height="20" fill="#d1d5d9"/><rect x="1118" y="719" width="1" height="20" fill="#d1d5d9"/><rect x="1180" y="719" width="1" height="20" fill="#d1d5d9"/><rect x="1242" y="719" width="1" height="20" fill="#d1d5d9"/><rect x="26" y="760" width="1220" height="1" fill="#d1d5d9"/><rect x="84" y="740" width="1" height="20" fill="#d1d5d9"/><rect x="227" y="740" width="1" height="20" fill="#d1d5d9"/><rect x="289" y="740" width="1" height="20" fill="#d1d5d9"/><rect x="351" y="740" width="1" height="20" fill="#d1d5d9"/><rect x="413" y="740" width="1" height="20" fill="#d1d5d9"/><rect x="475" y="740" width="1" height="20" fill="#d1d5d9"/><rect x="537" y="740" width="1" height="20" fill="#d1d5d9"/><rect x="684" y="740" width="1" height="20" fill="#d1d5d9"/><rect x="932" y="740" width="1" height="20" fill="#d1d5d9"/><rect x="994" y="740" width="1" height="20" fill="#d1d5d9"/><rect x="1056" y="740" width="1" height="20" fill="#d1d5d9"/><rect x="1118" y="740" width="1" height="20" fill="#d1d5d9"/><rect x="1180" y="740" width="1" height="20" fill="#d1d5d9"/><rect x="1242" y="740" width="1" height="20" fill="#d1d5d9"/><rect x="84" y="761" width="1" height="5" fill="#d1d5d9"/><rect x="227" y="761" width="1" height="5" fill="#d1d5d9"/><rect x="289" y="761" width="1" height="5" fill="#d1d5d9"/><rect x="351" y="761" width="1" height="5" fill="#d1d5d9"/><rect x="413" y="761" width="1" height="5" fill="#d1d5d9"/><rect x="475" y="761" width="1" height="5" fill="#d1d5d9"/><rect x="537" y="761" width="1" height="5" fill="#d1d5d9"/><rect x="684" y="761" width="1" height="5" fill="#d1d5d9"/><rect x="870" y="761" width="1" height="5" fill="#d1d5d9"/><rect x="932" y="761" width="1" height="5" fill="#d1d5d9"/><rect x="994" y="761" width="1" height="5" fill="#d1d5d9"/><rect x="1056" y="761" width="1" height="5" fill="#d1d5d9"/><rect x="1118" y="761" width="1" height="5" fill="#d1d5d9"/><rect x="1180" y="761" width="1" height="5" fill="#d1d5d9"/><rect x="1242" y="761" width="1" height="5" fill="#d1d5d9"/>
<rect x="26" y="51" width="1" height="58" fill="#000"/>
<rect x="26" y="51" width="449" height="1" fill="#000"/>
<rect x="474" y="51" width="3" height="55" fill="#000"/>
<rect x="26" y="108" width="446" height="3" fill="#000"/>
<rect x="473" y="107" width="5" height="5" fill="#000"/>
<polygon points="26,131 32,131 26,137" fill="#186818"/><polygon points="26,152 32,152 26,158" fill="#186818"/><polygon points="26,173 32,173 26,179" fill="#186818"/><polygon points="26,194 32,194 26,200" fill="#186818"/><polygon points="26,215 32,215 26,221" fill="#186818"/><polygon points="26,236 32,236 26,242" fill="#186818"/><polygon points="26,257 32,257 26,263" fill="#186818"/><polygon points="26,278 32,278 26,284" fill="#186818"/><polygon points="26,299 32,299 26,305" fill="#186818"/><polygon points="26,320 32,320 26,326" fill="#186818"/><polygon points="26,341 32,341 26,347" fill="#186818"/><polygon points="26,362 32,362 26,368" fill="#186818"/><polygon points="26,383 32,383 26,389" fill="#186818"/><polygon points="26,425 32,425 26,431" fill="#186818"/><polygon points="26,446 32,446 26,452" fill="#186818"/><polygon points="26,467 32,467 26,473" fill="#186818"/><polygon points="26,488 32,488 26,494" fill="#186818"/><polygon points="26,509 32,509 26,515" fill="#186818"/><polygon points="26,530 32,530 26,536" fill="#186818"/><polygon points="26,551 32,551 26,557" fill="#186818"/><polygon points="476,131 482,131 476,137" fill="#186818"/><polygon points="476,152 482,152 476,158" fill="#186818"/><polygon points="476,173 482,173 476,179" fill="#186818"/><polygon points="476,194 482,194 476,200" fill="#186818"/><polygon points="476,215 482,215 476,221" fill="#186818"/><polygon points="476,236 482,236 476,242" fill="#186818"/><polygon points="476,257 482,257 476,263" fill="#186818"/><polygon points="476,278 482,278 476,284" fill="#186818"/><polygon points="476,320 482,320 476,326" fill="#186818"/><polygon points="476,341 482,341 476,347" fill="#186818"/><polygon points="476,425 482,425 476,431" fill="#186818"/><polygon points="476,446 482,446 476,452" fill="#186818"/><polygon points="476,467 482,467 476,473" fill="#186818"/><polygon points="476,488 482,488 476,494" fill="#186818"/><polygon points="476,509 482,509 476,515" fill="#186818"/><polygon points="476,530 482,530 476,536" fill="#186818"/><polygon points="476,551 482,551 476,557" fill="#186818"/>
</svg>
<div class="t" style="left:26px;width:58px;text-align:center;top:114px;font-size:13px;font-weight:bold;color:#000;">7.10</div><div class="t" style="left:87px;top:113px;font-size:13px;font-weight:normal;color:#000;letter-spacing:0.000px;">DĘBNIAKI I</div><div class="t" style="left:26px;width:58px;text-align:center;top:135px;font-size:13px;font-weight:normal;color:#000;">7.15</div><div class="t" style="left:87px;top:134px;font-size:13px;font-weight:normal;color:#000;letter-spacing:0.000px;">KRZEWENT I</div><div class="t" style="left:26px;width:58px;text-align:center;top:156px;font-size:13px;font-weight:normal;color:#000;">7.22</div><div class="t" style="left:87px;top:155px;font-size:13px;font-weight:normal;color:#000;letter-spacing:0.182px;">WIĘSŁAWICE I</div><div class="t" style="left:26px;width:58px;text-align:center;top:177px;font-size:13px;font-weight:bold;color:#673596;">7.30</div><div class="t" style="left:88px;top:176px;font-size:13px;font-weight:bold;color:#673596;letter-spacing:0.000px;">SZFW</div><div class="t" style="left:26px;width:58px;text-align:center;top:198px;font-size:13px;font-weight:normal;color:#000;">7.32</div><div class="t" style="left:87px;top:197px;font-size:13px;font-weight:normal;color:#000;letter-spacing:0.000px;">DOBRZELEWICE I</div><div class="t" style="left:26px;width:58px;text-align:center;top:219px;font-size:13px;font-weight:normal;color:#000;">7.35</div><div class="t" style="left:87px;top:218px;font-size:13px;font-weight:normal;color:#000;letter-spacing:-0.071px;">DOBRZELEWICE II</div><div class="t" style="left:26px;width:58px;text-align:center;top:240px;font-size:13px;font-weight:normal;color:#000;">7.37</div><div class="t" style="left:87px;top:239px;font-size:13px;font-weight:normal;color:#000;letter-spacing:0.000px;">DOBRZELEWICE III</div><div class="t" style="left:26px;width:58px;text-align:center;top:261px;font-size:13px;font-weight:normal;color:#000;">7.40</div><div class="t" style="left:87px;top:260px;font-size:13px;font-weight:normal;color:#000;letter-spacing:0.000px;">UNISŁAWICE WIADUKT</div><div class="t" style="left:26px;width:58px;text-align:center;top:282px;font-size:13px;font-weight:normal;color:#000;">7.45</div><div class="t" style="left:87px;top:281px;font-size:13px;font-weight:normal;color:#000;letter-spacing:0.077px;">UNISŁAWICE SKR</div><div class="t" style="left:26px;width:58px;text-align:center;top:303px;font-size:13px;font-weight:normal;color:#000;">7.50</div><div class="t" style="left:87px;top:302px;font-size:13px;font-weight:normal;color:#000;letter-spacing:0.333px;">DĄBRÓWKA I</div><div class="t" style="left:26px;width:58px;text-align:center;top:324px;font-size:13px;font-weight:normal;color:#000;">7.52</div><div class="t" style="left:87px;top:323px;font-size:13px;font-weight:normal;color:#000;letter-spacing:0.000px;">STRZAŁY I</div><div class="t" style="left:26px;width:58px;text-align:center;top:345px;font-size:13px;font-weight:bold;color:#673596;">7.55</div><div class="t" style="left:88px;top:344px;font-size:13px;font-weight:bold;color:#673596;letter-spacing:0.000px;">SZFW</div><div class="t" style="left:26px;width:58px;text-align:center;top:366px;font-size:13px;font-weight:normal;color:#000;">8.15</div><div class="t" style="left:87px;top:365px;font-size:13px;font-weight:normal;color:#000;letter-spacing:-0.200px;">DZIARDONICE ŚWIETLICA</div><div class="t" style="left:26px;width:58px;text-align:center;top:387px;font-size:13px;font-weight:bold;color:#673596;">8.20</div><div class="t" style="left:88px;top:386px;font-size:13px;font-weight:bold;color:#673596;letter-spacing:0.000px;">SPG</div><div class="t" style="left:26px;width:58px;text-align:center;top:429px;font-size:13px;font-weight:bold;color:#673596;">12.25</div><div class="t" style="left:88px;top:428px;font-size:13px;font-weight:bold;color:#673596;letter-spacing:0.000px;"><span>SZFW I </span><span style="font-weight:normal;-webkit-text-stroke:0.4px">CZĘŚĆ</span></div><div class="t" style="left:26px;width:58px;text-align:center;top:450px;font-size:13px;font-weight:normal;color:#000;">12.27</div><div class="t" style="left:87px;top:449px;font-size:13px;font-weight:normal;color:#000;width:140px;overflow:hidden;">UNISŁAWICE WIADUKT</div><div class="t" style="left:26px;width:58px;text-align:center;top:471px;font-size:13px;font-weight:normal;color:#000;">12.30</div><div class="t" style="left:87px;top:470px;font-size:13px;font-weight:normal;color:#000;letter-spacing:0.000px;">UNISŁAWICE SKR</div><div class="t" style="left:26px;width:58px;text-align:center;top:492px;font-size:13px;font-weight:normal;color:#000;">12.35</div><div class="t" style="left:87px;top:491px;font-size:13px;font-weight:normal;color:#000;letter-spacing:0.333px;">DĄBRÓWKA I</div><div class="t" style="left:26px;width:58px;text-align:center;top:513px;font-size:13px;font-weight:normal;color:#000;">12.40</div><div class="t" style="left:87px;top:512px;font-size:13px;font-weight:normal;color:#000;letter-spacing:-0.108px;">STRZAŁY REMIZA</div><div class="t" style="left:26px;width:58px;text-align:center;top:534px;font-size:13px;font-weight:normal;color:#000;">12.45</div><div class="t" style="left:87px;top:533px;font-size:13px;font-weight:normal;color:#000;letter-spacing:0.108px;">BOGUSŁAWICE IV</div><div class="t" style="left:26px;width:58px;text-align:center;top:555px;font-size:13px;font-weight:normal;color:#000;">12.50</div><div class="t" style="left:87px;top:554px;font-size:13px;font-weight:normal;color:#000;letter-spacing:0.208px;">BOGUSŁAWICE I</div><div class="t" style="left:26px;width:58px;text-align:center;top:576px;font-size:13px;font-weight:bold;color:#673596;">13.00</div><div class="t" style="left:88px;top:575px;font-size:13px;font-weight:bold;color:#673596;letter-spacing:0.000px;">SPG</div><div class="t" style="left:26px;width:58px;text-align:center;top:597px;font-size:13px;font-weight:normal;color:#000;">13.05</div><div class="t" style="left:87px;top:596px;font-size:13px;font-weight:normal;color:#000;letter-spacing:0.000px;">DZIARDONICE ŚW.</div><div class="t" style="left:26px;width:58px;text-align:center;top:618px;font-size:13px;font-weight:normal;color:#000;">13.10</div><div class="t" style="left:87px;top:617px;font-size:13px;font-weight:normal;color:#000;letter-spacing:0.182px;">DĄBRÓWKA III</div><div class="t" style="left:26px;width:58px;text-align:center;top:639px;font-size:13px;font-weight:normal;color:#000;">13.15</div><div class="t" style="left:87px;top:638px;font-size:13px;font-weight:normal;color:#000;letter-spacing:0.333px;">OSSÓWEK</div><div class="t" style="left:26px;width:58px;text-align:center;top:660px;font-size:13px;font-weight:normal;color:#000;">13.20</div><div class="t" style="left:87px;top:659px;font-size:13px;font-weight:normal;color:#000;letter-spacing:0.217px;">OSSÓWEK OGRÓD</div><div class="t" style="left:26px;width:58px;text-align:center;top:681px;font-size:13px;font-weight:normal;color:#000;">13.25</div><div class="t" style="left:87px;top:680px;font-size:13px;font-weight:normal;color:#000;letter-spacing:0.000px;">UNISŁAWICE SKR</div><div class="t" style="left:26px;width:58px;text-align:center;top:702px;font-size:13px;font-weight:normal;color:#000;">13.30</div><div class="t" style="left:87px;top:701px;font-size:13px;font-weight:normal;color:#000;letter-spacing:0.000px;">UNISŁAWICE WIEŻA</div><div class="t" style="left:132px;top:344px;font-size:13px;font-weight:normal;color:#339966;text-decoration:underline;text-decoration-skip-ink:none;letter-spacing:0.06px;">Dzieci jadące do Grabkowa zostają w tym autobusie</div><div class="t" style="left:476px;width:61px;text-align:center;top:114px;font-size:13px;font-weight:bold;color:#000;">7.10</div><div class="t" style="left:540px;top:113px;font-size:13px;font-weight:normal;color:#000;letter-spacing:0.650px;">KOWAL</div><div class="t" style="left:476px;width:61px;text-align:center;top:135px;font-size:13px;font-weight:normal;color:#000;">7.20</div><div class="t" style="left:540px;top:134px;font-size:13px;font-weight:normal;color:#000;letter-spacing:0.167px;">BOGUSŁAWICE I</div><div class="t" style="left:476px;width:61px;text-align:center;top:156px;font-size:13px;font-weight:normal;color:#000;">7.25</div><div class="t" style="left:540px;top:155px;font-size:13px;font-weight:normal;color:#000;letter-spacing:0.108px;">BOGUSŁAWICE IV</div><div class="t" style="left:476px;width:61px;text-align:center;top:177px;font-size:13px;font-weight:bold;color:#673596;">7.30</div><div class="t" style="left:541px;top:176px;font-size:13px;font-weight:bold;color:#673596;letter-spacing:0.000px;">SZFW</div><div class="t" style="left:476px;width:61px;text-align:center;top:198px;font-size:13px;font-weight:normal;color:#000;">7.34</div><div class="t" style="left:540px;top:197px;font-size:13px;font-weight:normal;color:#000;letter-spacing:0.167px;">OSSÓWEK OGRÓD</div><div class="t" style="left:476px;width:61px;text-align:center;top:219px;font-size:13px;font-weight:normal;color:#000;">7.37</div><div class="t" style="left:540px;top:218px;font-size:13px;font-weight:normal;color:#000;letter-spacing:0.433px;">OSSÓWEK</div><div class="t" style="left:476px;width:61px;text-align:center;top:240px;font-size:13px;font-weight:normal;color:#000;">7.43</div><div class="t" style="left:540px;top:239px;font-size:13px;font-weight:normal;color:#000;letter-spacing:0.182px;">DĄBRÓWKA III</div><div class="t" style="left:476px;width:61px;text-align:center;top:261px;font-size:13px;font-weight:normal;color:#000;">7.50</div><div class="t" style="left:540px;top:260px;font-size:13px;font-weight:normal;color:#000;letter-spacing:-0.167px;">CZERNIEWICZKI</div><div class="t" style="left:476px;width:61px;text-align:center;top:282px;font-size:13px;font-weight:normal;color:#000;">7.55</div><div class="t" style="left:540px;top:281px;font-size:13px;font-weight:normal;color:#000;letter-spacing:-0.160px;">CZERNIEWICZKI II</div><div class="t" style="left:476px;width:61px;text-align:center;top:303px;font-size:13px;font-weight:normal;color:#000;">8.07</div><div class="t" style="left:540px;top:302px;font-size:13px;font-weight:normal;color:#000;letter-spacing:0.300px;">KSIĘŻA KĘPKA</div><div class="t" style="left:476px;width:61px;text-align:center;top:324px;font-size:13px;font-weight:normal;color:#000;">8.20</div><div class="t" style="left:540px;top:323px;font-size:13px;font-weight:normal;color:#000;letter-spacing:0.153px;">KĘPKA SZLACHECKA</div><div class="t" style="left:476px;width:61px;text-align:center;top:345px;font-size:13px;font-weight:bold;color:#673596;">8.25</div><div class="t" style="left:541px;top:344px;font-size:13px;font-weight:bold;color:#673596;letter-spacing:0.800px;">SPG</div><div class="t" style="left:476px;width:61px;text-align:center;top:429px;font-size:13px;font-weight:bold;color:#673596;">12.25</div><div class="t" style="left:541px;top:428px;font-size:13px;font-weight:bold;color:#673596;letter-spacing:-0.142px;"><span>SZFW II </span><span style="font-weight:normal;-webkit-text-stroke:0.4px">CZĘŚĆ</span></div><div class="t" style="left:476px;width:61px;text-align:center;top:450px;font-size:13px;font-weight:normal;color:#000;">12.27</div><div class="t" style="left:540px;top:449px;font-size:13px;font-weight:normal;color:#000;letter-spacing:0.000px;">DOBRZELEWICE III</div><div class="t" style="left:476px;width:61px;text-align:center;top:471px;font-size:13px;font-weight:normal;color:#000;">12.30</div><div class="t" style="left:540px;top:470px;font-size:13px;font-weight:normal;color:#000;letter-spacing:0.000px;">DOBRZELEWICE I</div><div class="t" style="left:476px;width:61px;text-align:center;top:492px;font-size:13px;font-weight:normal;color:#000;">12.32</div><div class="t" style="left:540px;top:491px;font-size:13px;font-weight:normal;color:#000;letter-spacing:0.000px;">DOBRZELEWICE III</div><div class="t" style="left:476px;width:61px;text-align:center;top:513px;font-size:13px;font-weight:normal;color:#000;">12.35</div><div class="t" style="left:540px;top:512px;font-size:13px;font-weight:normal;color:#000;letter-spacing:0.000px;">GRODNO</div><div class="t" style="left:476px;width:61px;text-align:center;top:534px;font-size:13px;font-weight:normal;color:#000;">12.40</div><div class="t" style="left:540px;top:533px;font-size:13px;font-weight:normal;color:#000;letter-spacing:0.192px;">WIĘSŁAWICE II</div><div class="t" style="left:476px;width:61px;text-align:center;top:555px;font-size:13px;font-weight:normal;color:#000;">12.50</div><div class="t" style="left:540px;top:554px;font-size:13px;font-weight:normal;color:#000;letter-spacing:0.000px;">DĘBNIAKI I</div><div class="t" style="left:476px;width:61px;text-align:center;top:576px;font-size:13px;font-weight:bold;color:#673596;">13.00</div><div class="t" style="left:541px;top:575px;font-size:13px;font-weight:bold;color:#673596;letter-spacing:0.000px;">SPG</div><div class="t" style="left:476px;width:61px;text-align:center;top:618px;font-size:13px;font-weight:normal;color:#000;">13.05</div><div class="t" style="left:540px;top:617px;font-size:13px;font-weight:normal;color:#000;letter-spacing:0.154px;">KĘPKA SZLACH.I</div><div class="t" style="left:476px;width:61px;text-align:center;top:639px;font-size:13px;font-weight:normal;color:#000;">13.13</div><div class="t" style="left:540px;top:638px;font-size:13px;font-weight:normal;color:#000;letter-spacing:0.300px;">KSIĘŻA KĘPKA</div><div class="t" style="left:476px;width:61px;text-align:center;top:660px;font-size:13px;font-weight:normal;color:#000;">13.20</div><div class="t" style="left:540px;top:659px;font-size:13px;font-weight:normal;color:#000;letter-spacing:-0.160px;">CZERNIEWICZKI II</div><div class="t" style="left:476px;width:61px;text-align:center;top:681px;font-size:13px;font-weight:normal;color:#000;">13.24</div><div class="t" style="left:540px;top:680px;font-size:13px;font-weight:normal;color:#000;letter-spacing:-0.167px;">CZERNIEWICZKI</div><div class="t" style="left:476px;width:61px;text-align:center;top:702px;font-size:13px;font-weight:normal;color:#000;">13.34</div><div class="t" style="left:540px;top:701px;font-size:13px;font-weight:normal;color:#000;letter-spacing:0.650px;">KOWAL</div><div class="t" style="left:476px;width:61px;text-align:center;top:723px;font-size:13px;font-weight:normal;color:#000;">13.40</div><div class="t" style="left:540px;top:722px;font-size:13px;font-weight:normal;color:#000;letter-spacing:0.200px;">DĘBNIAKI</div><div class="t" style="left:476px;width:61px;text-align:center;top:744px;font-size:13px;font-weight:normal;color:#000;">13.45</div><div class="t" style="left:540px;top:743px;font-size:13px;font-weight:normal;color:#000;letter-spacing:0.000px;">KRZEWENT</div><div class="ttl" style="left:26px;width:449px;top:64px">ROZKŁAD NA ROK SZKOLNY 2020/2021</div><div class="ttl" style="left:26px;width:449px;top:80px">18.01.2021 - 29.01.2021</div><div class="ttl" style="left:475px;width:455px;top:64px">ROZKŁAD NA ROK SZKOLNY 2020/2021</div><div class="ttl" style="left:475px;width:455px;top:80px">18.01.2021 - 29.01.2021</div>
</body></html>
